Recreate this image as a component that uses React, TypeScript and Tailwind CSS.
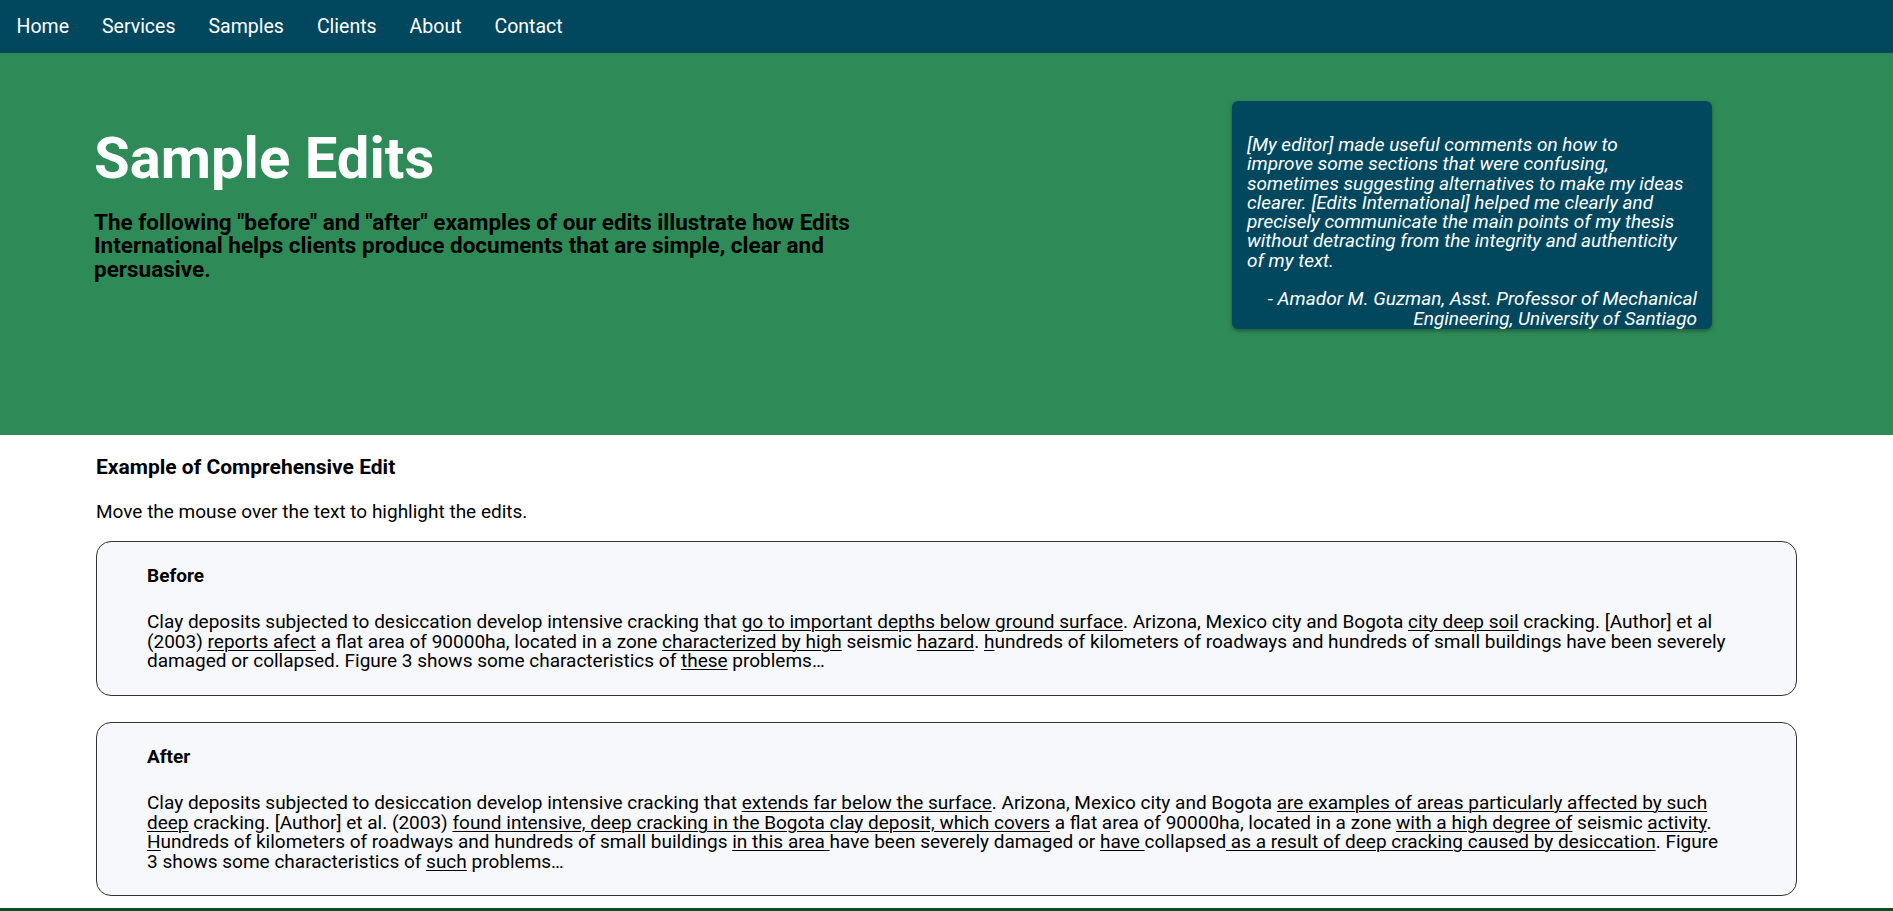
import React from "react"

const navLinks = ["Home", "Services", "Samples", "Clients", "About", "Contact"]

function U({ children }: { children: React.ReactNode }) {
  return <span className="underline underline-offset-2 decoration-1">{children}</span>
}

function EditBox({ label, pr, children }: { label: string; pr: string; children: React.ReactNode }) {
  return (
    <div className={`rounded-[15px] border border-[#333] bg-[#f7f8fc] pt-[24px] pb-[24px] pl-[50px] ${pr}`}>
      <h3 className="text-[19px] font-bold leading-[19.5px] text-black">{label}</h3>
      <p className="mt-[27px] text-[19px] leading-[19.5px] text-black">{children}</p>
    </div>
  )
}

export default function App() {
  return (
    <div className="min-h-screen bg-white font-['Roboto',sans-serif] text-black">
      {/* top nav */}
      <nav className="flex h-[53px] items-center bg-[#01485f]">
        {navLinks.map((l) => (
          <a key={l} href="#" className="px-[16.5px] text-[19.5px] leading-[23px] text-white">
            {l}
          </a>
        ))}
      </nav>

      {/* hero */}
      <header className="flex h-[382px] bg-[#2e8b57]">
        <div className="pl-[94px] pt-[75px]">
          <h1 className="text-[58px] font-bold leading-[61px] text-white">Sample Edits</h1>
          <p className="mt-[22px] w-[800px] text-[22.5px] font-bold leading-[23.3px] text-black">
            The following "before" and "after" examples of our edits illustrate how Edits International helps clients
            produce documents that are simple, clear and persuasive.
          </p>
        </div>
        <div className="ml-auto mr-[181px] mt-[48px] h-[228px] w-[480px] rounded-[6px] bg-[#01485f] px-[15px] pt-[34px] italic text-white shadow-[0_2px_4px_rgba(0,0,0,0.35)]">
          <p className="text-[19px] leading-[19.3px]">
            [My editor] made useful comments on how to
            <br />
            improve some sections that were confusing, sometimes suggesting alternatives to make my ideas clearer. [Edits
            International] helped me clearly and precisely communicate the main points of my thesis without detracting
            from the integrity and authenticity of my text.
          </p>
          <p className="mt-[19.3px] text-right text-[19px] leading-[19.3px]">
            - Amador M. Guzman, Asst. Professor of Mechanical Engineering, University of Santiago
          </p>
        </div>
      </header>

      {/* samples */}
      <main className="px-[96px] pt-[21px] pb-[12px]">
        <h2 className="text-[21px] font-bold leading-[23px]">Example of Comprehensive Edit</h2>
        <p className="mt-[23px] text-[19px] leading-[19.5px]">Move the mouse over the text to highlight the edits.</p>

        <div className="mt-[19px] flex flex-col gap-[26px]">
          <EditBox label="Before" pr="pr-[25px]">
            Clay deposits subjected to desiccation develop intensive cracking that{" "}
            <U>go to important depths below ground surface</U>. Arizona, Mexico city and Bogota <U>city deep soil</U>{" "}
            cracking. [Author] et al (2003) <U>reports afect</U> a flat area of 90000ha, located in a zone{" "}
            <U>characterized by high</U> seismic <U>hazard</U>. <U>h</U>undreds of kilometers of roadways and hundreds
            of small buildings have been severely damaged or collapsed. Figure 3 shows some characteristics of{" "}
            <U>these</U> problems…
          </EditBox>
          <EditBox label="After" pr="pr-[46px]">
            Clay deposits subjected to desiccation develop intensive cracking that <U>extends far below the surface</U>.
            Arizona, Mexico city and Bogota <U>are examples of areas particularly affected by such deep</U> cracking.
            [Author] et al. (2003) <U>found intensive, deep cracking in the Bogota clay deposit, which covers</U> a flat
            area of 90000ha, located in a zone <U>with a high degree of</U> seismic <U>activity</U>. <U>H</U>undreds of
            kilometers of roadways and hundreds of small buildings <U>in this area </U>have been severely damaged or{" "}
            <U>have </U>collapsed<U> as a result of deep cracking caused by desiccation</U>. Figure
            <br />3 shows some characteristics of <U>such</U> problems…
          </EditBox>
        </div>
      </main>

      <footer className="h-[60px] bg-[#0c4f24]" />
    </div>
  )
}
